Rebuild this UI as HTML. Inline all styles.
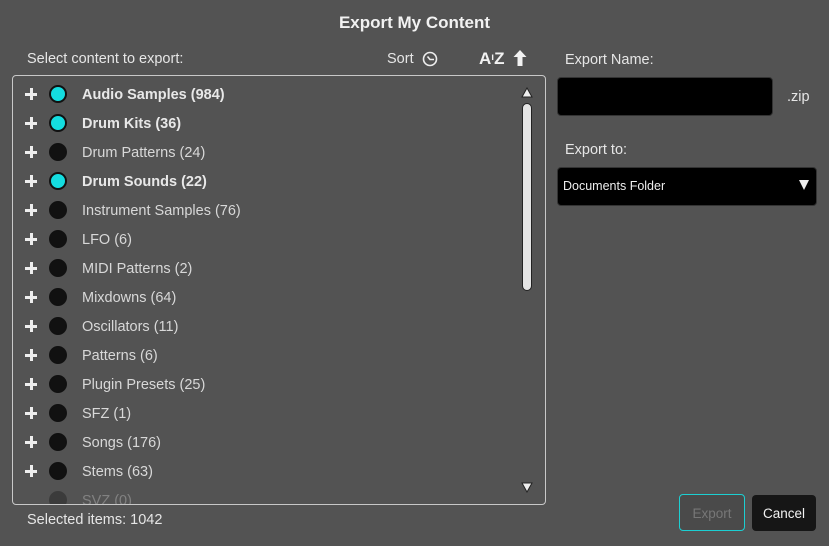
<!DOCTYPE html>
<html><head><style>
body{margin:0;width:829px;height:546px;background:#535353;font-family:"Liberation Sans",sans-serif;overflow:hidden;position:relative;color:#e6e6e6}
.a{position:absolute;white-space:nowrap}
#box{position:absolute;left:12px;top:75px;width:532px;height:428px;border:1.5px solid #c8c8c8;border-radius:4px;overflow:hidden}
.row{position:absolute;left:0;height:29px;width:500px}
.plus{position:absolute;left:12px;top:7px;width:12px;height:12px}
.plus:before{content:"";position:absolute;left:0;top:4.5px;width:12px;height:3px;background:#eee}
.plus:after{content:"";position:absolute;left:4.5px;top:0;width:3px;height:12px;background:#eee}
.dot{position:absolute;left:36px;top:4px;width:16px;height:16px;border-radius:50%;background:#111;border:1.5px solid #111}
.dot.on{background:#14dde0;border:2px solid #111;width:14px;height:14px}
.lab{position:absolute;left:69px;top:6px;font-size:14.5px;color:#d8d8d8}
.lab.b{font-weight:bold;color:#e8e8e8}
</style></head><body>
<div class="a" style="left:0;width:829px;text-align:center;top:13px;font-size:17px;font-weight:bold;color:#f2f2f2">Export My Content</div>
<div class="a" style="left:27px;top:51px;font-size:14.5px">Select content to export:</div>
<div class="a" style="left:387px;top:51px;font-size:14.5px">Sort</div>
<svg class="a" style="left:421px;top:50px" width="18" height="18" viewBox="0 0 18 18"><circle cx="9" cy="9" r="6.5" fill="none" stroke="#eee" stroke-width="1.6"/><path d="M6.5 6.5 L9 9.5 L13 9.5" fill="none" stroke="#eee" stroke-width="1.6"/></svg>
<div class="a" style="left:479px;top:49px;font-size:17px;font-weight:bold;color:#f2f2f2">A<span style="font-size:10px;vertical-align:4px">ı</span>Z</div>
<svg class="a" style="left:512px;top:49px" width="16" height="18" viewBox="0 0 16 18"><path d="M8 1 L1.5 8 L5.5 8 L5.5 17 L10.5 17 L10.5 8 L14.5 8 Z" fill="#f2f2f2"/></svg>
<div id="box">
<div class="row" style="top:5px"><div class="plus"></div><div class="dot on"></div><div class="lab b">Audio Samples (984)</div></div>
<div class="row" style="top:34px"><div class="plus"></div><div class="dot on"></div><div class="lab b">Drum Kits (36)</div></div>
<div class="row" style="top:63px"><div class="plus"></div><div class="dot"></div><div class="lab">Drum Patterns (24)</div></div>
<div class="row" style="top:92px"><div class="plus"></div><div class="dot on"></div><div class="lab b">Drum Sounds (22)</div></div>
<div class="row" style="top:121px"><div class="plus"></div><div class="dot"></div><div class="lab">Instrument Samples (76)</div></div>
<div class="row" style="top:150px"><div class="plus"></div><div class="dot"></div><div class="lab">LFO (6)</div></div>
<div class="row" style="top:179px"><div class="plus"></div><div class="dot"></div><div class="lab">MIDI Patterns (2)</div></div>
<div class="row" style="top:208px"><div class="plus"></div><div class="dot"></div><div class="lab">Mixdowns (64)</div></div>
<div class="row" style="top:237px"><div class="plus"></div><div class="dot"></div><div class="lab">Oscillators (11)</div></div>
<div class="row" style="top:266px"><div class="plus"></div><div class="dot"></div><div class="lab">Patterns (6)</div></div>
<div class="row" style="top:295px"><div class="plus"></div><div class="dot"></div><div class="lab">Plugin Presets (25)</div></div>
<div class="row" style="top:324px"><div class="plus"></div><div class="dot"></div><div class="lab">SFZ (1)</div></div>
<div class="row" style="top:353px"><div class="plus"></div><div class="dot"></div><div class="lab">Songs (176)</div></div>
<div class="row" style="top:382px"><div class="plus"></div><div class="dot"></div><div class="lab">Stems (63)</div></div>
<div class="row" style="top:411px;opacity:.35"><div class="dot"></div><div class="lab">SVZ (0)</div></div>
<svg class="a" style="left:508px;top:11px" width="12" height="11"><path d="M6 1 L11 10 L1 10 Z" fill="#eee" stroke="#222" stroke-width="1"/></svg>
<div class="a" style="left:509px;top:27px;width:8px;height:186px;background:#e4e4e4;border:1px solid #222;border-radius:5px"></div>
<svg class="a" style="left:508px;top:406px" width="12" height="11"><path d="M1 1 L11 1 L6 10 Z" fill="#eee" stroke="#222" stroke-width="1"/></svg>
</div>
<div class="a" style="left:27px;top:512px;font-size:14.5px">Selected items: 1042</div>
<div class="a" style="left:565px;top:52px;font-size:14.5px">Export Name:</div>
<div class="a" style="left:557px;top:77px;width:214px;height:37px;background:#000;border:1px solid #333;border-radius:4px"></div>
<div class="a" style="left:787px;top:89px;font-size:14.5px">.zip</div>
<div class="a" style="left:565px;top:142px;font-size:14.5px">Export to:</div>
<div class="a" style="left:557px;top:167px;width:258px;height:37px;background:#000;border:1px solid #333;border-radius:4px"></div>
<div class="a" style="left:563px;top:179px;font-size:12.5px;color:#eee">Documents Folder</div>
<svg class="a" style="left:798px;top:179px" width="12" height="12"><path d="M1 1 L11 1 L6 11 Z" fill="#eee"/></svg>
<div class="a" style="left:679px;top:494px;width:64px;height:35px;border:1.5px solid #1ccfd2;border-radius:4px;background:#4a4a4a;color:#777;font-size:13.5px;text-align:center;line-height:37px">Export</div>
<div class="a" style="left:752px;top:495px;width:64px;height:36px;border-radius:4px;background:#161616;color:#f2f2f2;font-size:13.5px;text-align:center;line-height:37px">Cancel</div>
</body></html>
